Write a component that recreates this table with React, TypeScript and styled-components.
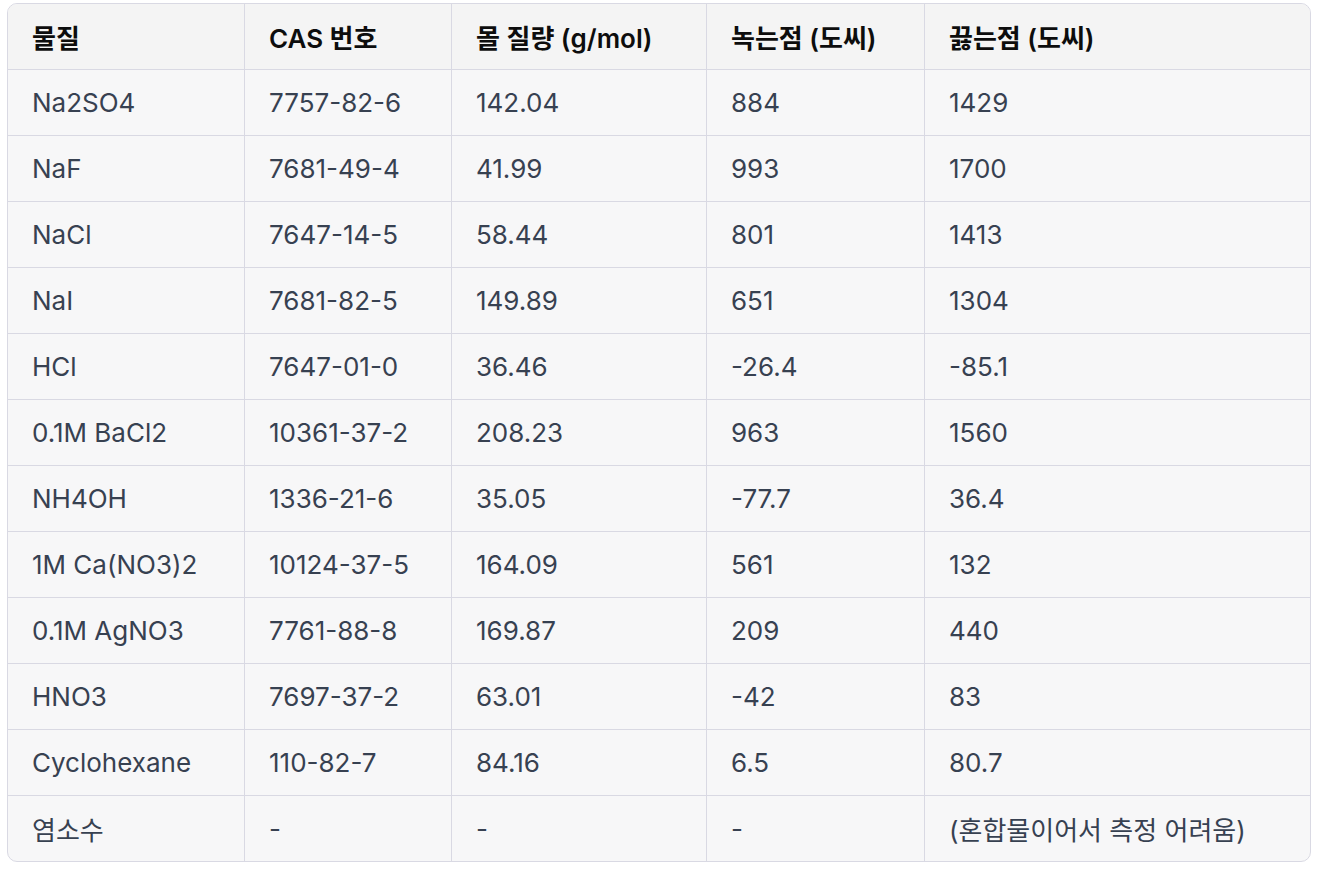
import React from "react";
import styled, { createGlobalStyle } from "styled-components";

type Row = [string, string, string, string, string];

const headers: Row = ["물질", "CAS 번호", "몰 질량 (g/mol)", "녹는점 (도씨)", "끓는점 (도씨)"];

const rows: Row[] = [
  ["Na2SO4", "7757-82-6", "142.04", "884", "1429"],
  ["NaF", "7681-49-4", "41.99", "993", "1700"],
  ["NaCl", "7647-14-5", "58.44", "801", "1413"],
  ["NaI", "7681-82-5", "149.89", "651", "1304"],
  ["HCl", "7647-01-0", "36.46", "-26.4", "-85.1"],
  ["0.1M BaCl2", "10361-37-2", "208.23", "963", "1560"],
  ["NH4OH", "1336-21-6", "35.05", "-77.7", "36.4"],
  ["1M Ca(NO3)2", "10124-37-5", "164.09", "561", "132"],
  ["0.1M AgNO3", "7761-88-8", "169.87", "209", "440"],
  ["HNO3", "7697-37-2", "63.01", "-42", "83"],
  ["Cyclohexane", "110-82-7", "84.16", "6.5", "80.7"],
  ["염소수", "-", "-", "-", "(혼합물이어서 측정 어려움)"],
];

const columnWidths = [237, 207, 255, 218, 385];

const App = () => {
  return (
    <>
      <GlobalStyle />
      <Frame>
        <Table>
          <colgroup>
            {columnWidths.map((w, i) => (
              <col key={i} style={{ width: w }} />
            ))}
          </colgroup>
          <thead>
            <tr>
              {headers.map((h) => (
                <HeadCell key={h}>{h}</HeadCell>
              ))}
            </tr>
          </thead>
          <tbody>
            {rows.map((row, r) => (
              <tr key={r}>
                {row.map((cell, c) => (
                  <Cell key={c} $last={r === rows.length - 1}>
                    {cell}
                  </Cell>
                ))}
              </tr>
            ))}
          </tbody>
        </Table>
      </Frame>
    </>
  );
};

const GlobalStyle = createGlobalStyle`
  body {
    margin: 0;
    background: #ffffff;
    font-family: Inter, "Noto Sans CJK KR", sans-serif;
  }
`;

const Frame = styled.div`
  margin: 3px 0 0 7px;
  width: 1304px;
  border: 1px solid #d9d9e3;
  border-radius: 10px;
  overflow: hidden;
  box-sizing: border-box;
  background: #f7f7f8;
`;

const Table = styled.table`
  width: 1302px;
  table-layout: fixed;
  border-collapse: separate;
  border-spacing: 0;
`;

const HeadCell = styled.th`
  height: 66px;
  padding: 0 0 0 24px;
  box-sizing: border-box;
  text-align: left;
  font-size: 26px;
  font-weight: 600;
  color: #0d0d0d;
  background: #f4f4f4;
  border-bottom: 1px solid #d9d9e3;
  border-right: 1px solid #d9d9e3;
  white-space: nowrap;

  &:last-child {
    border-right: none;
  }
`;

const Cell = styled.td<{ $last: boolean }>`
  height: ${(p) => (p.$last ? "65px" : "66px")};
  padding: 0 0 0 24px;
  box-sizing: border-box;
  font-size: 26px;
  color: #374151;
  border-bottom: ${(p) => (p.$last ? "none" : "1px solid #d9d9e3")};
  border-right: 1px solid #d9d9e3;
  white-space: nowrap;

  &:last-child {
    border-right: none;
  }
`;

export default App;
